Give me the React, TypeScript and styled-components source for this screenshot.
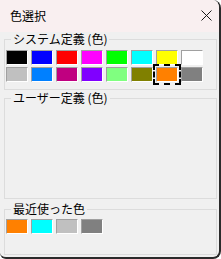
import React from 'react';
import styled, { createGlobalStyle } from 'styled-components';

const GlobalStyle = createGlobalStyle`
    html, body {
        margin: 0;
        padding: 0;
        background: #ffffff;
    }
    body {
        font-family: "Noto Sans CJK JP", "Noto Sans", sans-serif;
        font-size: 12px;
        color: #000;
    }
`;

const Window = styled.div`
    box-sizing: border-box;
    width: 221px;
    height: 259px;
    background: #f0f0f0;
    border-right: 2px solid #2b2b2b;
    border-bottom: 2px solid #2b2b2b;
    border-radius: 0 8px 8px 6px;
    overflow: hidden;
    display: flex;
    flex-direction: column;
`;

const TitleBar = styled.div`
    height: 31px;
    flex: none;
    background: #f9eff0;
    display: flex;
    align-items: center;
    justify-content: space-between;
    padding: 0 7px 1px 10px;
`;

const Title = styled.span`
    font-size: 12px;
    line-height: 14px;
`;

const CloseButton = styled.div`
    width: 12px;
    height: 12px;
    display: flex;
    align-items: center;
    justify-content: center;
`;

const Group = styled.fieldset<{ $top: number; $padTop: number; $padBottom: number }>`
    margin: ${p => p.$top}px 2px 0 4px;
    padding: ${p => p.$padTop}px 1px ${p => p.$padBottom}px 1px;
    border: 1px solid #dcdcdc;
    min-width: 0;
`;

const Legend = styled.legend`
    margin-left: 5px;
    padding: 0 2px;
    font-size: 12px;
    line-height: 14px;
    white-space: pre;
`;

const SwatchGrid = styled.div`
    display: grid;
    grid-template-columns: repeat(8, 22px);
    column-gap: 3px;
    row-gap: 2px;
`;

const Swatch = styled.div<{ $color: string; $focused?: boolean }>`
    box-sizing: border-box;
    width: 22px;
    height: 15px;
    background: ${p => p.$color};
    border-top: 1px solid #a0a0a0;
    border-left: 1px solid #a0a0a0;
    border-right: 1px solid #ffffff;
    border-bottom: 1px solid #ffffff;
    outline: ${p => (p.$focused ? '2px dashed #000' : 'none')};
    outline-offset: 1px;
`;

const EmptyArea = styled.div`
    height: 93px;
`;

const systemColors = [
    '#000000', '#0000ff', '#ff0000', '#ff00ff', '#00ff00', '#00ffff', '#ffff00', '#ffffff',
    '#c0c0c0', '#0080ff', '#c00080', '#8000ff', '#80ff80', '#808000', '#ff8000', '#808080',
];

const recentColors = ['#ff8000', '#00ffff', '#c0c0c0', '#808080'];

export default function App() {
    return (
        <>
            <GlobalStyle />
            <Window>
                <TitleBar>
                    <Title>色選択</Title>
                    <CloseButton>
                        <svg width="11" height="11" viewBox="0 0 11 11">
                            <path d="M0.5 0.5 L10.5 10.5 M10.5 0.5 L0.5 10.5" stroke="#1a1a1a" strokeWidth="1" />
                        </svg>
                    </CloseButton>
                </TitleBar>
                <Group $top={0} $padTop={4} $padBottom={7}>
                    <Legend>システム定義 (色)</Legend>
                    <SwatchGrid>
                        {systemColors.map((c, i) => (
                            <Swatch key={i} $color={c} $focused={i === 14} />
                        ))}
                    </SwatchGrid>
                </Group>
                <Group $top={1} $padTop={0} $padBottom={0}>
                    <Legend>ユーザー定義 (色)</Legend>
                    <EmptyArea />
                </Group>
                <Group $top={3} $padTop={3} $padBottom={20}>
                    <Legend>最近使った色</Legend>
                    <SwatchGrid>
                        {recentColors.map((c, i) => (
                            <Swatch key={i} $color={c} />
                        ))}
                    </SwatchGrid>
                </Group>
            </Window>
        </>
    );
}
